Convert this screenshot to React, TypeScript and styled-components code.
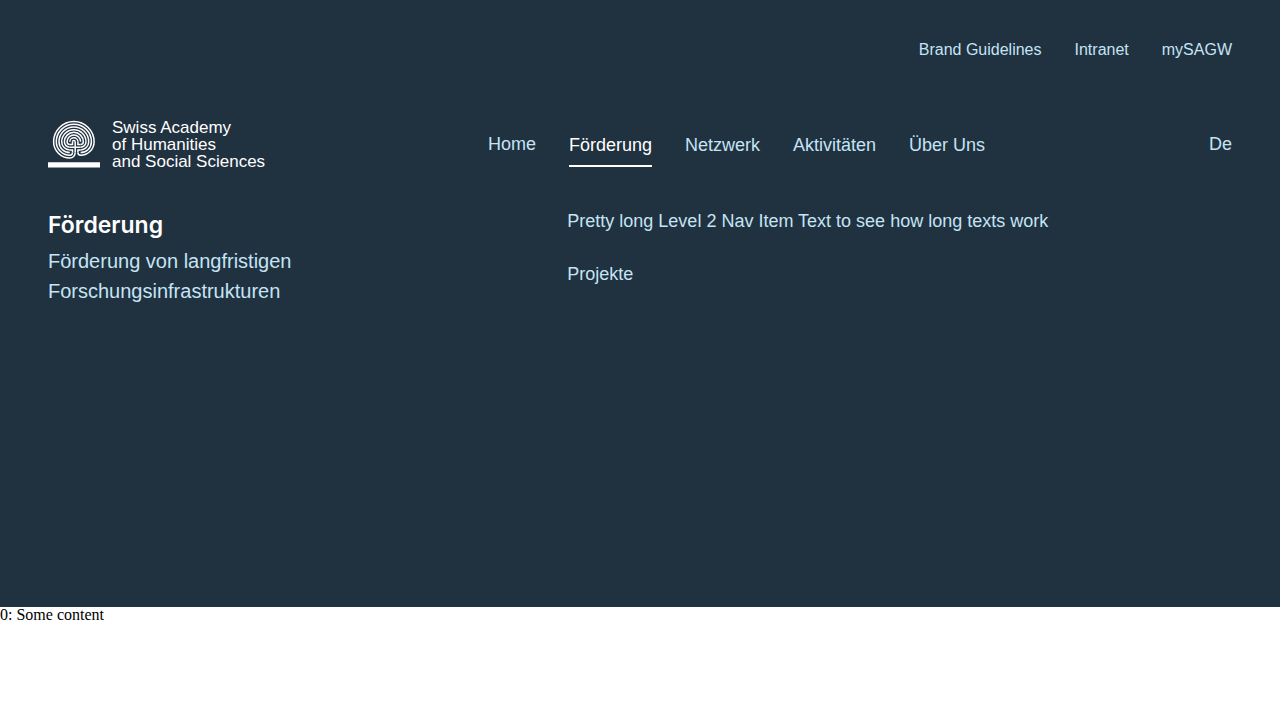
import React from "react";
import styled, { createGlobalStyle } from "styled-components";

const GlobalStyle = createGlobalStyle`
  *, *::before, *::after { box-sizing: border-box; }
  body { margin: 0; background: #fff; }
`;

const sans = `"Liberation Sans", Arial, sans-serif`;
const colors = { navy: "#203140", ice: "#c5e4f4", white: "#fff" };

const Header = styled.header`
  display: flex;
  flex-direction: column;
  padding: 38px 48px 301px;
  background: ${colors.navy};
  color: ${colors.ice};
  font-family: ${sans};
`;

const ServiceNav = styled.nav`
  display: flex;
  justify-content: flex-end;
  gap: 33px;
`;

const ServiceLink = styled.a`
  color: inherit;
  font-size: 16px;
  line-height: 24px;
  text-decoration: none;
`;

const MainBar = styled.div`
  display: flex;
  justify-content: space-between;
  align-items: flex-start;
  margin-top: 57px;
`;

const Brand = styled.a`
  display: flex;
  align-items: center;
  gap: 12px;
  width: 216px;
  color: ${colors.white};
  text-decoration: none;
`;

const LogoMark = styled.svg`
  flex: none;
  width: 52px;
  height: 49px;
`;

const BrandName = styled.span`
  font-size: 17px;
  line-height: 17px;
  white-space: nowrap;
`;

const MainNav = styled.nav`
  display: flex;
  align-items: flex-start;
  gap: 33px;
  padding-top: 11px;
`;

const NavLink = styled.a`
  color: inherit;
  font-size: 18px;
  line-height: 28px;
  text-decoration: none;
`;

const NavButton = styled.button<{ $active?: boolean }>`
  padding: 1px 0 6px;
  border: 0;
  border-bottom: 2px solid ${(p) => (p.$active ? colors.white : "transparent")};
  background: none;
  color: ${(p) => (p.$active ? colors.white : "inherit")};
  font-family: inherit;
  font-size: 18px;
  line-height: 28px;
  cursor: pointer;
`;

const Language = styled.div`
  padding-top: 11px;
`;

const Panel = styled.div`
  display: grid;
  grid-template-columns: 25fr 32fr;
  margin-top: 37px;
`;

const Title = styled.h2`
  margin: 0;
  color: ${colors.white};
  font-family: Inter, ${sans};
  font-size: 23px;
  font-weight: 600;
  line-height: 36px;
`;

const Lead = styled.p`
  max-width: 260px;
  margin: 3px 0 0;
  font-size: 20px;
  line-height: 30px;
`;

const SubList = styled.ul`
  display: flex;
  flex-direction: column;
  gap: 25px;
  margin: 0;
  padding: 0;
  list-style: none;
`;

const SubItem = styled.li`
  display: flex;
`;

const Content = styled.main`
  font-family: "Liberation Serif", "Times New Roman", serif;
  font-size: 16px;
  line-height: 16px;
`;

function Labyrinth() {
  return (
    <LogoMark viewBox="0 0 52 49" aria-hidden="true">
      <g
        transform="translate(27.2 27.2) scale(-2.7 2.7)"
        fill="none"
        stroke="currentColor"
        strokeWidth="0.55"
      >
        <path d="M-2 0H2M0-2V2" />
        <path d="M-2-1H-1V-2M1-2V-1H2M-2 1H-1V2M1 2V1H2" />
        <path d="M0-2A.5 .5 0 0 1 1-2" />
        <path d="M-1-2A1.5 1.5 0 0 1 2-2" />
        <path d="M-2-2A2.5 2.5 0 0 1 3-2A1 1 0 0 1 2-1" />
        <path d="M-2-1A1 1 0 0 1-3-2A3.5 3.5 0 0 1 4-2A2 2 0 0 1 2 0" />
        <path d="M-2 0A2 2 0 0 1-4-2A4.5 4.5 0 0 1 5-2A3 3 0 0 1 2 1" />
        <path d="M-2 1A3 3 0 0 1-5-2A5.5 5.5 0 0 1 6-2A4 4 0 0 1 2 2" />
        <path d="M-2 2A4 4 0 0 1-6-2A6.5 6.5 0 0 1 7-2A5 5 0 0 1 2 3A1 1 0 0 1 1 2" />
        <path d="M-1 2A1 1 0 0 1-2 3A5 5 0 0 1-7-2A7.5 7.5 0 0 1 8-2A6 6 0 0 1 2 4A2 2 0 0 1 0 2" />
      </g>
      <path d="M0 42.3H52V47.5H0Z" fill="currentColor" />
    </LogoMark>
  );
}

const sections = ["Förderung", "Netzwerk", "Aktivitäten", "Über Uns"];

export default function App() {
  return (
    <>
      <GlobalStyle />
      <Header>
        <ServiceNav aria-label="Service">
          <ServiceLink href="#brand">Brand Guidelines</ServiceLink>
          <ServiceLink href="#intranet">Intranet</ServiceLink>
          <ServiceLink href="#mysagw">mySAGW</ServiceLink>
        </ServiceNav>
        <MainBar>
          <Brand href="#top">
            <Labyrinth />
            <BrandName>
              Swiss Academy
              <br />
              of Humanities
              <br />
              and Social Sciences
            </BrandName>
          </Brand>
          <MainNav aria-label="Main">
            <NavLink href="#home">Home</NavLink>
            {sections.map((name) => (
              <NavButton
                key={name}
                type="button"
                $active={name === "Förderung"}
                aria-expanded={name === "Förderung"}
              >
                {name}
              </NavButton>
            ))}
          </MainNav>
          <Language>
            <NavLink href="#de">De</NavLink>
          </Language>
        </MainBar>
        <Panel>
          <div>
            <Title>Förderung</Title>
            <Lead>Förderung von langfristigen Forschungsinfrastrukturen</Lead>
          </div>
          <SubList>
            <SubItem>
              <NavLink href="#level-2">
                Pretty long Level 2 Nav Item Text to see how long texts work
              </NavLink>
            </SubItem>
            <SubItem>
              <NavLink href="#projekte">Projekte</NavLink>
            </SubItem>
          </SubList>
        </Panel>
      </Header>
      <Content>0: Some content</Content>
    </>
  );
}
